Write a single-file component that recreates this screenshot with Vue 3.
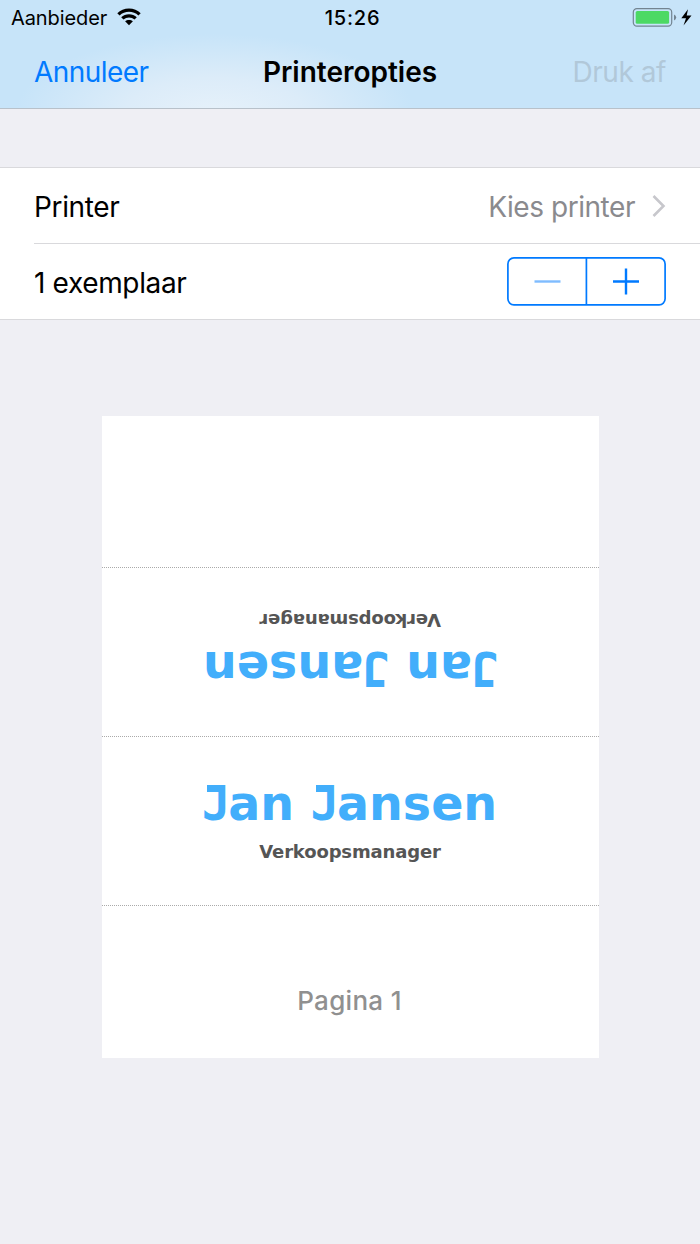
<script setup>
const cards = [
  { flipped: true },
  { flipped: false },
]
</script>

<template>
  <main class="screen">
    <header class="top">
      <div class="status">
        <div class="carrier">
          <span class="t carrier-name">Aanbieder</span>
          <svg class="wifi" width="24" height="18" viewBox="0 0 24 18">
            <path d="M12 0.5C7.4 .5 3.3 2.3.3 5.2L2.6 7.5A13.6 13.6 0 0 1 21.4 7.5L23.7 5.2C20.7 2.3 16.6.5 12 .5Z" />
            <path d="M12 6.3C9 6.3 6.3 7.4 4.2 9.2L6.5 11.5A8.2 8.2 0 0 1 17.5 11.5L19.8 9.2C17.7 7.4 15 6.3 12 6.3Z" />
            <path d="M12 12C10.5 12 9.2 12.5 8.1 13.3L12 17.2L15.9 13.3C14.8 12.5 13.5 12 12 12Z" />
          </svg>
        </div>
        <span class="t clock">15:26</span>
        <svg class="battery" width="62" height="22" viewBox="0 0 62 22">
          <rect x="1.3" y="1.6" width="38.4" height="17.6" rx="3.6" fill="none" stroke="#738491" stroke-width="1.2" />
          <rect x="3.7" y="4" width="33.4" height="12.8" rx="1.6" fill="#4cd964" />
          <path d="M42 7.5Q44.2 8.5 44.2 10.5T42 13.5Z" fill="#738491" />
          <path d="M56 2.2L49.3 11.3H54L51.5 18.5L59.5 8.6H54.7Z" fill="#000" />
        </svg>
      </div>
      <nav class="nav">
        <span class="t cancel">Annuleer</span>
        <span class="t title">Printeropties</span>
        <span class="t print">Druk af</span>
      </nav>
    </header>

    <section class="options">
      <div class="row first">
        <span class="t label-printer">Printer</span>
        <span class="choose">
          <span class="t choose-text">Kies printer</span>
          <svg class="chevron" width="14" height="24" viewBox="0 0 14 24"><path d="M1.5 2L11.5 12L1.5 22" fill="none" stroke="#c7c7cc" stroke-width="2.6" /></svg>
        </span>
      </div>
      <div class="row">
        <span class="t label-copies">1 exemplaar</span>
        <svg class="stepper" width="160" height="50" viewBox="0 0 160 50">
          <rect x="1.9" y="1.9" width="157.2" height="46.9" rx="6" fill="none" stroke="#007aff" stroke-width="1.7" />
          <path d="M80.4 2V49" fill="none" stroke="#007aff" stroke-width="1.7" />
          <path d="M107 25.5H133M120 12.5V38.5" fill="none" stroke="#007aff" stroke-width="2.4" />
          <path d="M28.5 25.5H54.5" stroke="#7fbcff" stroke-width="2.4" />
        </svg>
      </div>
    </section>

    <section class="paper">
      <div class="blank"></div>
      <div v-for="(card, i) in cards" :key="i" class="fold">
        <div class="card" :class="{ flipped: card.flipped }">
          <span class="name"><span class="cap">J</span>an <span class="cap">J</span>ansen</span>
          <span class="role">Verkoopsmanager</span>
        </div>
      </div>
      <div class="end"><span class="t page">Pagina 1</span></div>
    </section>
  </main>
</template>

<style>
body { margin: 0; background: #efeff4; }
</style>
<style scoped>
* { box-sizing: border-box; }
.screen { width: 700px; height: 1244px; background: #efeff4; font-family: Inter, "Liberation Sans", sans-serif; color: #000; overflow: hidden; }
.t { white-space: nowrap; display: inline-block; }
.top { height: 109px; border-bottom: 1px solid #b8c1ca; background: radial-gradient(ellipse 200px 80px at 215px 114px, #e6f1fa 0%, #dcecf9 45%, #c7e4f9 100%); }
.status { height: 36px; display: grid; grid-template-columns: 1fr auto 1fr; align-items: center; padding: 0 6px 0 11px; }
.carrier { display: flex; align-items: center; gap: 10px; }
.carrier-name { font-size: 20px; letter-spacing: -0.1px; }
.wifi { display: block; margin-top: -2px; }
.clock { font-size: 20px; font-weight: 500; letter-spacing: 0.8px; }
.battery { justify-self: end; margin-top: -1px; }
.nav { height: 72px; display: grid; grid-template-columns: 1fr auto 1fr; align-items: center; padding: 0 34px 1px; font-size: 28px; }
.cancel { color: #007aff; letter-spacing: -0.55px; }
.title { font-weight: 600; }
.print { justify-self: end; color: #b1c8d9; letter-spacing: -0.45px; }
.options { margin-top: 58px; background: #fff; border-top: 1px solid #d9d9dc; border-bottom: 1px solid #d9d9dc; height: 153px; padding-left: 34px; }
.row { height: 75px; display: flex; justify-content: space-between; align-items: center; padding-right: 34px; font-size: 28px; }
.row .t { padding-top: 2px; }
.first { border-bottom: 1px solid #d9d9dc; height: 76px; }
.label-printer { letter-spacing: -0.35px; }
.label-copies { letter-spacing: -0.35px; }
.choose { display: flex; align-items: center; gap: 17px; color: #8a8a8e; }
.choose-text { letter-spacing: -0.45px; }
.stepper { margin-top: -2px; }
.paper { width: 497px; height: 642px; margin: 96px 0 0 102px; background: #fff; }
.blank { height: 151px; }
.fold { height: 169px; border-top: 1px dotted #aaa; display: flex; justify-content: center; align-items: center; }
.card { display: flex; flex-direction: column; align-items: center; font-family: "DejaVu Sans", sans-serif; font-weight: 700; padding-bottom: 3px; margin-right: 1px; }
.flipped { transform: rotate(180deg); margin-top: -2px; }
.name { font-size: 47.5px; line-height: 56px; color: #42aefb; white-space: nowrap; padding-right: 1px; }
.cap { display: inline-block; position: relative; width: 26.4px; font-family: "DejaVu Sans Mono", monospace; }
/* top-left serif of the capital J */
.cap::before { content: ""; position: absolute; left: 5px; top: 9px; width: 12px; height: 7px; background: #42aefb; }
.role { font-size: 18px; line-height: 22px; margin-top: 9px; color: #555; letter-spacing: -0.15px; }
.end { height: 153px; border-top: 1px dotted #aaa; display: flex; justify-content: center; padding-top: 79px; }
.page { font-size: 26px; line-height: 32px; font-weight: 500; color: #909090; letter-spacing: 0.3px; margin-right: 2px; }
</style>
